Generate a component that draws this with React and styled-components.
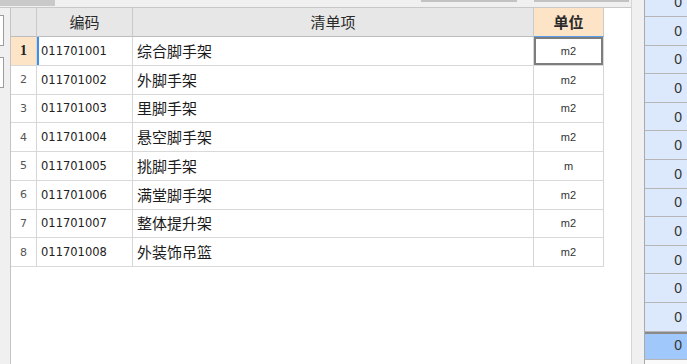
import styled, { createGlobalStyle } from "styled-components"

const GlobalStyle = createGlobalStyle`
  html, body {
    margin: 0;
    padding: 0;
    background: #f0f0f0;
  }
  body {
    font-family: "Liberation Sans", Arial, sans-serif;
  }
  * {
    box-sizing: border-box;
  }
`

const items = [
  { code: "011701001", name: "综合脚手架", unit: "m2" },
  { code: "011701002", name: "外脚手架", unit: "m2" },
  { code: "011701003", name: "里脚手架", unit: "m2" },
  { code: "011701004", name: "悬空脚手架", unit: "m2" },
  { code: "011701005", name: "挑脚手架", unit: "m" },
  { code: "011701006", name: "满堂脚手架", unit: "m2" },
  { code: "011701007", name: "整体提升架", unit: "m2" },
  { code: "011701008", name: "外装饰吊篮", unit: "m2" },
]

const cjk = `"Noto Sans CJK SC", "Liberation Sans", sans-serif`

const Page = styled.div`
  display: flex;
  width: 687px;
  height: 364px;
  overflow: hidden;
  background: #f0f0f0;
`

const LeftArea = styled.div`
  display: flex;
  flex-direction: column;
  width: 631px;
`

const TopBar = styled.div`
  display: flex;
  align-items: flex-start;
  height: 8px;
  padding-right: 2px;
  gap: 17px;
  border-bottom: 1px solid #c8c8c8;
`

const Tab = styled.div`
  width: ${(p) => p.$w}px;
  height: ${(p) => p.$h}px;
  background: ${(p) => p.$bg};
`

const Spacer = styled.div`
  flex: 1;
`

const Body = styled.div`
  display: flex;
  flex: 1;
`

const LeftStrip = styled.div`
  display: flex;
  flex-direction: column;
  gap: 11px;
  width: 11px;
  padding-top: 7px;
  border-right: 1px solid #c4c4c4;
`

const Stub = styled.div`
  width: 4px;
  height: 31px;
  background: #fff;
  border: 1px solid #9c9c9c;
  border-left: none;
`

const Panel = styled.div`
  flex: 1;
  background: #fff;
`

const Row = styled.div`
  display: grid;
  grid-template-columns: 26px 96px 401px 70px;
  height: ${(p) => (p.$head ? "29px" : "28.75px")};
`

const Cell = styled.div`
  display: flex;
  align-items: center;
  justify-content: ${(p) => p.$align || "flex-start"};
  padding: 0 4px;
  border-right: 1px solid #d6d6d6;
  border-bottom: 1px solid #d9d9d9;
  color: #1c1c1c;
  font-size: 13px;
  white-space: nowrap;
`

const HeadCell = styled(Cell)`
  justify-content: center;
  padding-bottom: 1px;
  background: ${(p) => (p.$active ? "#fde4c6" : "#e7e7e7")};
  border-right-color: #cacaca;
  border-bottom: 1px solid ${(p) => (p.$active ? "#5a9ef0" : "#bdbdbd")};
  font-family: ${cjk};
  font-size: 15px;
  font-weight: ${(p) => (p.$active ? 700 : 400)};
  color: #2a2a2a;
`

const NumCell = styled(Cell)`
  justify-content: center;
  background: ${(p) => (p.$active ? "#fde4c6" : "#fff")};
  font-family: ${(p) => (p.$active ? `"Liberation Serif", serif` : `"DejaVu Sans", sans-serif`)};
  font-weight: ${(p) => (p.$active ? 700 : 400)};
  font-size: ${(p) => (p.$active ? "14px" : "11px")};
  color: ${(p) => (p.$active ? "#222" : "#555")};
`

const CodeCell = styled(Cell)`
  font-family: "DejaVu Sans", sans-serif;
  font-size: 11.5px;
  color: #222;
  box-shadow: ${(p) => (p.$active ? "inset 2px 0 0 #3d8fe8" : "none")};
`

const NameCell = styled(Cell)`
  padding-bottom: 1px;
  font-family: ${cjk};
  font-size: 15px;
`

const UnitCell = styled(Cell)`
  justify-content: center;
  font-size: 11px;
  color: #333;
  box-shadow: ${(p) => (p.$active ? "inset 0 0 0 2px #7d7d7d" : "none")};
`

const Gutter = styled.div`
  width: 14px;
  background: #f0f0f0;
  border-left: 1px solid #d6d6d6;
  border-right: 1px solid #a9a9a9;
`

const BlueColumn = styled.div`
  width: 42px;
  overflow: hidden;
  background: #fafafa;
`

const BlueList = styled.div`
  margin-top: -11.6px;
`

const BlueCell = styled.div`
  display: flex;
  align-items: center;
  justify-content: flex-end;
  height: 28.6px;
  padding-right: 5px;
  background: ${(p) => (p.$active ? "#a0c8fa" : "#dce8fb")};
  border-bottom: 1px solid #b6b6b6;
  box-shadow: ${(p) => (p.$active ? "inset 0 2px 0 #8a8a8a" : "none")};
  font-size: 14px;
  color: #333;
`

export default function App() {
  const blue = Array.from({ length: 13 })
  return (
    <>
      <GlobalStyle />
      <Page>
        <LeftArea>
          <TopBar>
            <Tab $w={55} $h={6} $bg="#c9c9c9" />
            <Spacer />
            <Tab $w={96} $h={2} $bg="#c2c2c2" />
            <Tab $w={95} $h={2} $bg="#c2c2c2" />
          </TopBar>
          <Body>
            <LeftStrip>
              <Stub />
              <Stub />
            </LeftStrip>
            <Panel>
              <Row $head>
                <HeadCell />
                <HeadCell>编码</HeadCell>
                <HeadCell>清单项</HeadCell>
                <HeadCell $active>单位</HeadCell>
              </Row>
              {items.map((item, i) => (
                <Row key={item.code}>
                  <NumCell $active={i === 0}>{i + 1}</NumCell>
                  <CodeCell $active={i === 0}>{item.code}</CodeCell>
                  <NameCell>{item.name}</NameCell>
                  <UnitCell $active={i === 0}>{item.unit}</UnitCell>
                </Row>
              ))}
            </Panel>
          </Body>
        </LeftArea>
        <Gutter />
        <BlueColumn>
          <BlueList>
            {blue.map((_, i) => (
              <BlueCell key={i} $active={i === 12}>
                0
              </BlueCell>
            ))}
          </BlueList>
        </BlueColumn>
      </Page>
    </>
  )
}
